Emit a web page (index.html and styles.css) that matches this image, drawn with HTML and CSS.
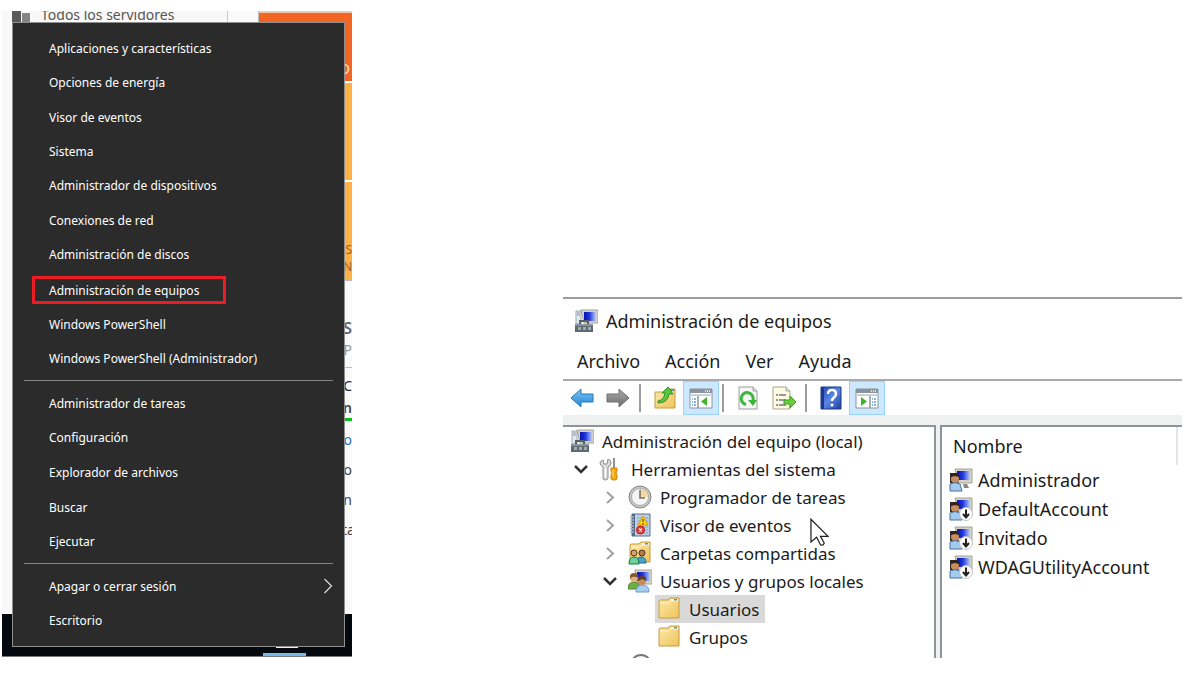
FILE: index.html
```html
<!DOCTYPE html>
<html lang="es">
<head>
<meta charset="utf-8">
<title>Administración de equipos</title>
<link rel="stylesheet" href="styles.css">
</head>
<body>
<svg class="defs" aria-hidden="true">
  <defs>
    <linearGradient id="g-blue" x1="0" y1="0" x2="0" y2="1"><stop offset="0" stop-color="#7cc6f3"/><stop offset="1" stop-color="#1f86d6"/></linearGradient>
    <linearGradient id="g-gray" x1="0" y1="0" x2="0" y2="1"><stop offset="0" stop-color="#aaa"/><stop offset="1" stop-color="#6c6c6c"/></linearGradient>
    <linearGradient id="g-fold" x1="0" y1="0" x2="1" y2="1"><stop offset="0" stop-color="#fde9a9"/><stop offset="1" stop-color="#efc35c"/></linearGradient>
    <linearGradient id="g-screen" x1="0" y1="0" x2="1" y2="0"><stop offset="0" stop-color="#0712b4"/><stop offset=".45" stop-color="#2036dc"/><stop offset="1" stop-color="#b4ccff"/></linearGradient>
    <linearGradient id="g-help" x1="0" y1="0" x2="1" y2="1"><stop offset="0" stop-color="#2447b4"/><stop offset=".5" stop-color="#5b86e6"/><stop offset="1" stop-color="#1c3c9c"/></linearGradient>
    <symbol id="i-computer" viewBox="0 0 24 24">
      <path d="M7 1h17v13H10z" fill="#d6d3c6" stroke="#a5a296"/><path d="M10 3h12v9H10z" fill="url(#g-screen)"/>
      <path d="M2 2h5v13H2z" fill="#e4e9ee" stroke="#9aa5b0"/><path d="M3 4h3M3 6h3" stroke="#8a97a5"/>
      <path d="M6 15v-3h8v3" fill="none" stroke="#55606a" stroke-width="2"/>
      <path d="M1 15h18v8H1z" fill="#5e6a72"/><path d="M1 15h18v2H1z" fill="#87949c"/><path d="M4 18h3v3H4zM9 18h3v3H9zM14 18h3v3h-3z" fill="#9eabb2"/>
    </symbol>
    <symbol id="i-tools" viewBox="0 0 24 24">
      <path d="M4 3l1 4 3 0 1-5q3 1 3 4 0 3-3 4v11q0 2-2.500 2T4 21V10Q1 8 1 6t3-3z" fill="#dadada" stroke="#8c8c8c"/>
      <path d="M6.500 11v9" stroke="#fff" stroke-width="1.500"/><path d="M15 1v10" stroke="#929292" stroke-width="2"/>
      <path d="M12 11h6v3l-1 2 1 2v4l-2 1h-2l-2-1v-4l1-2-1-2z" fill="#f6a90c" stroke="#d18408"/><path d="M14 13v7" stroke="#ffe188"/>
    </symbol>
    <symbol id="i-clock" viewBox="0 0 24 24">
      <circle cx="12" cy="12" r="11" fill="#c7c7c7" stroke="#858585"/><circle cx="12" cy="12" r="8.500" fill="#f4f6f8" stroke="#aaa"/>
      <path d="M12 12V4a8 8 0 0 1 8 8z" fill="#f7d89a"/><path d="M12 5v8h5" fill="none" stroke="#6d6d6d" stroke-width="1.500"/>
    </symbol>
    <symbol id="i-event" viewBox="0 0 24 24">
      <path d="M4 1h18v22H4z" fill="#bdd0e4" stroke="#526f92"/><path d="M4 1h3v22H4z" fill="#526a88"/>
      <path d="M9 5h11M9 8h11M9 11h11M9 14h11M9 17h11M9 20h11" stroke="#8aa5c2"/>
      <path d="M2 4h4M2 7h4M2 10h4M2 13h4M2 16h4M2 19h4" stroke="#a9b6c3" stroke-width="1.500"/>
      <path d="M15 3l5 9H10z" fill="#ffd21e" stroke="#d9a000"/><path d="M15 6v3m0 1v1.500" stroke="#443300"/>
      <circle cx="12.500" cy="17" r="4" fill="#e23a35" stroke="#b81e1e"/><path d="M11 15.500l3 3m0-3l-3 3" stroke="#fff" stroke-width="1.300"/>
    </symbol>
    <symbol id="i-folder" viewBox="0 0 24 24">
      <path d="M2 21V4l1-1h8l2-2h9v20z" fill="url(#g-fold)" stroke="#c99a3c"/><path d="M14 2h7v2h-7z" fill="#fff"/><path d="M17 2h3v2h-3z" fill="#4a94dc"/>
      <path d="M3 6h9l2-2h7" fill="none" stroke="#fff3c7"/>
    </symbol>
    <symbol id="i-shared" viewBox="0 0 24 24">
      <use href="#i-folder"/>
      <circle cx="6" cy="12" r="3" fill="#d9a070" stroke="#51361f"/><circle cx="14" cy="12" r="3" fill="#b97a4c" stroke="#51361f"/>
      <path d="M8 22q0-6 5-6t5 6z" fill="#4fa0c8" stroke="#146f90"/><path d="M1 23q0-7 5-7t5 7z" fill="#6fd29a" stroke="#177b42"/>
    </symbol>
    <symbol id="i-users" viewBox="0 0 24 24">
      <path d="M7 1h17v14H9z" fill="#d6d3c6" stroke="#a5a296"/><path d="M9 3h13v9H9z" fill="url(#g-screen)"/>
      <path d="M0 20q0-7 6-7t6 7z" fill="#6fae46" stroke="#4c8230"/><circle cx="6" cy="9" r="4" fill="#dfb084"/><path d="M2 10Q1 4 6 4q5 0 4 5Q7 7 4 8z" fill="#85582c"/>
      <path d="M8 23q0-7 6.500-7T21 23z" fill="#a7cdf1" stroke="#6d9bc9"/><circle cx="14" cy="12" r="4" fill="#c98a5b"/><path d="M10 12Q9 7 14 7q5 0 4 5-3-3-6-1z" fill="#5d3e28"/>
    </symbol>
    <symbol id="i-user" viewBox="0 0 24 24">
      <path d="M6 1h17v14H9z" fill="#d6d3c6" stroke="#a5a296"/><path d="M8 3h13v9H8z" fill="url(#g-screen)"/><path d="M14 16h4l2 4h-5z" fill="#888"/>
      <path d="M1 5h7l3 4-2 6H1z" fill="#332a25"/><circle cx="6" cy="11" r="4" fill="#c98d5e"/><path d="M2 9q0-4 4-4t4 4l-4-1z" fill="#30241b"/>
      <path d="M1 23V16q5-3 10 0l2 7z" fill="#a2cbef" stroke="#4e7197"/>
    </symbol>
    <symbol id="i-userdown" viewBox="0 0 24 24">
      <use href="#i-user"/><circle cx="17" cy="17" r="6.500" fill="#fff" stroke="#c2c2c2"/><path d="M17 12.500v7M14 17l3 3.500 3-3.500" fill="none" stroke="#222" stroke-width="2"/>
    </symbol>
    <symbol id="i-back" viewBox="0 0 24 24"><path d="M1 12l10-9v5h12v8H11v5z" fill="url(#g-blue)" stroke="#2979b5"/></symbol>
    <symbol id="i-forward" viewBox="0 0 24 24"><path d="M23 12L13 3v5H1v8h12v5z" fill="url(#g-gray)" stroke="#707070"/></symbol>
    <symbol id="i-up" viewBox="0 0 24 24">
      <path d="M2 22V6h9l2-3h9v19z" fill="url(#g-fold)" stroke="#c99a3c"/><path d="M17 4h4" stroke="#4a94dc" stroke-width="2"/>
      <path d="M5 15q6-1 7-8L9 7l6-6 5 7h-4q-1 9-11 9z" fill="#5cc63a" stroke="#34912a"/>
    </symbol>
    <symbol id="i-tree" viewBox="0 0 24 24">
      <path d="M1 3h22v19H1z" fill="#fff" stroke="#8c949b"/><path d="M1 3h22v4H1z" fill="#89939c"/><path d="M16 5h1m1 0h1m1 0h1" stroke="#fff" stroke-width="1.500"/>
      <path d="M1 8h22v2H1z" fill="#cbd0d4"/><path d="M9 10v12" stroke="#8c949b" stroke-width="1.500"/><path d="M3 13h4M3 16h4M3 19h4" stroke="#5b9bd5" stroke-width="1.500" stroke-dasharray="1 1 2"/>
      <path d="M18 11v9l-6-4.500z" fill="#3cb52a"/>
    </symbol>
    <symbol id="i-action" viewBox="0 0 24 24">
      <path d="M1 3h22v19H1z" fill="#fff" stroke="#8c949b"/><path d="M1 3h22v4H1z" fill="#89939c"/><path d="M16 5h1m1 0h1m1 0h1" stroke="#fff" stroke-width="1.500"/>
      <path d="M1 8h22v2H1z" fill="#cbd0d4"/><path d="M15 10v12" stroke="#8c949b" stroke-width="1.500"/><path d="M17 13h4M17 16h4M17 19h4" stroke="#5b9bd5" stroke-width="1.500" stroke-dasharray="1 1 2"/>
      <path d="M6 11v9l6-4.500z" fill="#3cb52a"/>
    </symbol>
    <symbol id="i-refresh" viewBox="0 0 24 24">
      <path d="M3 1h14l4 4v18H3z" fill="#f7f7f7" stroke="#9c9c9c"/><path d="M17 1v4h4" fill="#ddd" stroke="#9c9c9c"/>
      <path d="M10 18.500a6 6 0 1 1 7-4.500" fill="none" stroke="#3fb43a" stroke-width="3"/><path d="M12 14h9l-4 6z" fill="#3fb43a"/>
    </symbol>
    <symbol id="i-export" viewBox="0 0 24 24">
      <path d="M1 1h13l4 4v18H1z" fill="#fffbe2" stroke="#a9a48c"/><path d="M14 1v4h4" fill="#ddd" stroke="#a9a48c"/>
      <path d="M4 9h2m1 0h7M4 14h2m1 0h7M4 19h2m1 0h7" stroke="#77748a" stroke-width="1.500"/>
      <path d="M12 14h6v-4l6 6-6 6v-4h-6z" fill="#66cf3a" stroke="#3c9b25"/>
    </symbol>
    <symbol id="i-help" viewBox="0 0 24 24">
      <path d="M2 1h20v22H2z" fill="url(#g-help)" stroke="#1d3987"/><path d="M2 1h3v22H2z" fill="#1c3891"/>
      <path d="M9 8q0-4 4-4t4 4q0 2-2 3.500T13 15" fill="none" stroke="#fff" stroke-width="2.500"/><circle cx="13" cy="19" r="1.600" fill="#fff"/>
    </symbol>
    <symbol id="i-open" viewBox="0 0 24 24"><path d="M5 9l6 6 6-6" fill="none" stroke="#333" stroke-width="2.500"/></symbol>
    <symbol id="i-closed" viewBox="0 0 24 24"><path d="M8 7l6 5.500L8 18" fill="none" stroke="#a0a0a0" stroke-width="2"/></symbol>
  </defs>
</svg>

<main class="page">
  <section class="desktop">
    <div class="manager" aria-hidden="true">
      <div class="manager-body">
        <div class="nav">
          <svg class="nav-icon" viewBox="0 0 18 12"><path d="M0 0h9v12H0z" fill="#5a5a5a"/><path d="M10 2h8v10h-8z" fill="#858585"/></svg>
          <span class="nav-label">Todos los servidores</span>
        </div>
        <div class="gutter"></div>
        <div class="tiles">
          <div class="tile tile-hot"><span>O</span></div>
          <div class="tile"></div>
          <div class="tile tile-last"><span>S</span><span>N</span></div>
          <div class="strip">
            <span class="strip-title">S</span>
            <span class="strip-sub">P</span>
            <span class="strip-head">C</span>
            <span class="strip-ok">n</span>
            <span class="strip-link blue">o</span>
            <span class="strip-link">o</span>
            <span class="strip-link">n</span>
            <span class="strip-link strip-long">ta</span>
          </div>
        </div>
      </div>
      <div class="taskbar"><i class="task-glyph"></i><i class="task-active"></i></div>
    </div>

    <nav class="winx" aria-label="Menú de inicio rápido">
      <div class="group group-a">
        <button>Aplicaciones y características</button>
        <button>Opciones de energía</button>
        <button>Visor de eventos</button>
        <button>Sistema</button>
        <button>Administrador de dispositivos</button>
        <button>Conexiones de red</button>
        <button>Administración de discos</button>
        <button class="marked">Administración de equipos</button>
        <button>Windows PowerShell</button>
        <button>Windows PowerShell (Administrador)</button>
      </div>
      <hr>
      <div class="group group-b">
        <button>Administrador de tareas</button>
        <button>Configuración</button>
        <button>Explorador de archivos</button>
        <button>Buscar</button>
        <button>Ejecutar</button>
      </div>
      <hr>
      <div class="group group-c">
        <button>Apagar o cerrar sesión<svg class="more" viewBox="0 0 8 16"><path d="M0 1l7 7-7 7" fill="none" stroke="#ddd" stroke-width="1.200"/></svg></button>
        <button>Escritorio</button>
      </div>
    </nav>
  </section>

  <section class="window">
    <header class="titlebar"><svg class="icon"><use href="#i-computer"/></svg><span>Administración de equipos</span></header>
    <nav class="menubar"><button>Archivo</button><button>Acción</button><button>Ver</button><button>Ayuda</button></nav>
    <div class="toolbar">
      <button class="tool" aria-label="Atrás"><svg class="icon"><use href="#i-back"/></svg></button>
      <button class="tool" aria-label="Adelante"><svg class="icon"><use href="#i-forward"/></svg></button>
      <i class="sep"></i>
      <button class="tool" aria-label="Subir un nivel"><svg class="icon"><use href="#i-up"/></svg></button>
      <button class="tool on" aria-label="Árbol de consola"><svg class="icon"><use href="#i-tree"/></svg></button>
      <i class="sep"></i>
      <button class="tool" aria-label="Actualizar"><svg class="icon"><use href="#i-refresh"/></svg></button>
      <button class="tool" aria-label="Exportar lista"><svg class="icon"><use href="#i-export"/></svg></button>
      <i class="sep"></i>
      <button class="tool" aria-label="Ayuda"><svg class="icon"><use href="#i-help"/></svg></button>
      <button class="tool on" aria-label="Panel de acciones"><svg class="icon"><use href="#i-action"/></svg></button>
    </div>
    <div class="panes">
      <div class="pane tree-pane">
        <ul class="tree">
          <li class="row"><svg class="icon"><use href="#i-computer"/></svg>Administración del equipo (local)</li>
          <li class="row"><svg class="arrow"><use href="#i-open"/></svg><svg class="icon"><use href="#i-tools"/></svg>Herramientas del sistema</li>
          <li class="row level-2"><svg class="arrow"><use href="#i-closed"/></svg><svg class="icon"><use href="#i-clock"/></svg>Programador de tareas</li>
          <li class="row level-2"><svg class="arrow"><use href="#i-closed"/></svg><svg class="icon"><use href="#i-event"/></svg>Visor de eventos</li>
          <li class="row level-2"><svg class="arrow"><use href="#i-closed"/></svg><svg class="icon"><use href="#i-shared"/></svg>Carpetas compartidas</li>
          <li class="row level-2"><svg class="arrow"><use href="#i-open"/></svg><svg class="icon"><use href="#i-users"/></svg>Usuarios y grupos locales</li>
          <li class="row level-3"><span class="leaf selected"><svg class="icon"><use href="#i-folder"/></svg>Usuarios</span></li>
          <li class="row level-3"><span class="leaf"><svg class="icon"><use href="#i-folder"/></svg>Grupos</span></li>
          <li class="row cut"><svg class="icon" viewBox="0 0 24 24"><circle cx="12" cy="12" r="10" fill="#f3f3f3" stroke="#777" stroke-width="2"/></svg></li>
        </ul>
        <svg class="cursor" viewBox="0 0 20 30"><path d="M1 1v24l6-5 4 8q3 1 4-2l-4-7h8z" fill="#fff" stroke="#222" stroke-width="1.300"/></svg>
      </div>
      <div class="pane list-pane">
        <table class="list">
          <thead><tr><th>Nombre</th></tr></thead>
          <tbody>
            <tr><td><div class="cell"><svg class="icon"><use href="#i-user"/></svg>Administrador</div></td></tr>
            <tr><td><div class="cell"><svg class="icon"><use href="#i-userdown"/></svg>DefaultAccount</div></td></tr>
            <tr><td><div class="cell"><svg class="icon"><use href="#i-userdown"/></svg>Invitado</div></td></tr>
            <tr><td><div class="cell"><svg class="icon"><use href="#i-userdown"/></svg>WDAGUtilityAccount</div></td></tr>
          </tbody>
        </table>
      </div>
    </div>
  </section>
</main>
</body>
</html>
```
FILE: styles.css
```css
* { box-sizing: border-box; }
body { margin: 0; background: #fff; font-family: "Noto Sans", "Open Sans", sans-serif; color: #1b1b1b; }
button { font: inherit; color: inherit; background: none; border: 0; padding: 0; margin: 0; text-align: left; white-space: nowrap; }
.defs { position: absolute; width: 0; height: 0; }
.icon { width: 24px; height: 24px; flex: none; }

.page { display: grid; grid-template-columns: 350px minmax(0, 1fr); column-gap: 211px; align-items: start; padding: 11px 20px 32px 2px; }

/* desktop with the quick start menu */
.desktop { display: grid; overflow: hidden; }
.manager, .winx { grid-area: 1 / 1; }
.manager { display: flex; flex-direction: column; min-height: 0; background: #fafafa; }
.manager-body { flex: 1; display: flex; }
.nav { flex: 1; display: flex; align-items: flex-start; gap: 11px; padding-left: 10px; background: linear-gradient(to right, #f8f8f8 225px, #c9c9c9 225px, #c9c9c9 226px, #fbfbfb 226px); }
.nav-icon { width: 18px; height: 12px; }
.nav-label { height: 11px; line-height: 11px; margin-top: -2px; font-size: 14px; color: #555; }
.gutter { width: 31px; border-right: 1px solid #bbb; }
.tiles { width: 93px; display: flex; flex-direction: column; text-align: right; }
.tile { height: 99px; background: #fdb044; border-bottom: 2px solid #fff; font-size: 12px; line-height: 17px; color: #a0602a; display: flex; flex-direction: column; justify-content: flex-end; padding: 0 0 4px; }
.tile-hot { height: 72px; background: #f26522; border-top: 2px solid #f3c9b4; color: #fde3d5; font-size: 14px; padding: 0 2px 4px; }
.tile-last { border-bottom-color: #bbb; }
.strip { display: flex; flex-direction: column; padding-top: 36px; line-height: 22px; font-size: 14px; color: #444; }
.strip-title { font-size: 16px; font-weight: 600; color: #666; }
.strip-sub { height: 29px; color: #999; border-bottom: 1px solid #bbb; }
.strip-head { margin-top: 7px; height: 23px; color: #223; }
.strip-ok { height: 23px; font-weight: 600; line-height: 20px; border-bottom: 3px solid #0cbf14; }
.strip-link { margin-top: 8px; }
.strip-long { padding-left: 83px; text-align: left; }
.blue { color: #2673b8; }
.taskbar { height: 43px; background: #04080f; display: grid; align-content: end; padding-left: 261px; border-bottom: 1px solid #777; }
.task-glyph { width: 22px; height: 2px; margin: 0 0 5px 13px; background: #eee; }
.task-active { width: 43px; height: 3px; background: #76b9ed; }

.winx { position: relative; margin: 11px 7px 10px 10px; padding: 8px 11px; border: 1px solid #8f8f8f; background: #2b2b2b; color: #fff; font-size: 12px; }
.winx hr { margin: 4px 0 5px; border: 0; height: 1px; background: #858585; }
.group { display: flex; flex-direction: column; align-items: stretch; }
.group-a { height: 345px; }
.group-b { height: 173px; }
.group-c { height: 69px; }
.group button { flex: 1; display: flex; align-items: center; justify-content: space-between; padding-left: 25px; }
.group .marked { align-self: flex-start; flex: none; height: 28px; margin: 4px 0 3px 8px; padding: 0 24px 0 14px; border: 3px solid #ed1c24; }
.more { width: 9px; height: 16px; }

/* console window */
.window { margin-top: 286px; border-top: 2px solid #9d9d9d; background: #fff; font-size: 17px; }
.titlebar { height: 44px; display: flex; align-items: center; gap: 8px; padding-left: 11px; font-size: 18px; }
.menubar { height: 38px; display: flex; align-items: center; gap: 25px; padding-left: 14px; border-bottom: 2px solid #aaa; font-size: 18px; }
.toolbar { height: 34px; display: flex; align-items: center; padding-left: 1px; }
.tool { width: 36px; height: 34px; display: grid; place-items: center; }
.on { background: #cce8ff; border: 1px solid #99d1ff; }
.sep { width: 2px; height: 28px; margin: 0 6px 0 3px; background: #9c9c9c; }
.panes { display: flex; height: 243px; gap: 4px; padding-top: 10px; background: #f0f0f0; }
.pane { overflow: hidden; background: #fff; border-top: 2px solid #8f939c; }
.tree-pane { position: relative; flex: 0 0 373px; border-right: 2px solid #8f939c; }
.list-pane { flex: 1; border-left: 2px solid #8f939c; font-size: 18px; }
.tree { list-style: none; margin: 0; padding: 0 0 0 7px; }
.row { height: 28px; display: flex; align-items: center; gap: 8px; white-space: nowrap; }
.arrow { width: 24px; height: 24px; flex: none; margin-right: -3px; }
.level-2 { padding-left: 29px; }
.level-3 { padding-left: 85px; }
.leaf { height: 28px; display: flex; align-items: center; gap: 8px; padding: 0 6px 0 2px; }
.selected { background: #d9d9d9; }
.cut { padding-left: 59px; }
.cursor { position: absolute; left: 247px; top: 91px; width: 19px; height: 29px; }
.list { width: calc(100% - 4px); border-collapse: collapse; }
.list th { height: 38px; padding: 0 0 0 11px; text-align: left; font-weight: 400; border-right: 2px solid #e5e5e5; }
.list td { padding: 0 0 0 7px; }
.cell { height: 29px; display: flex; align-items: center; gap: 5px; }
```
